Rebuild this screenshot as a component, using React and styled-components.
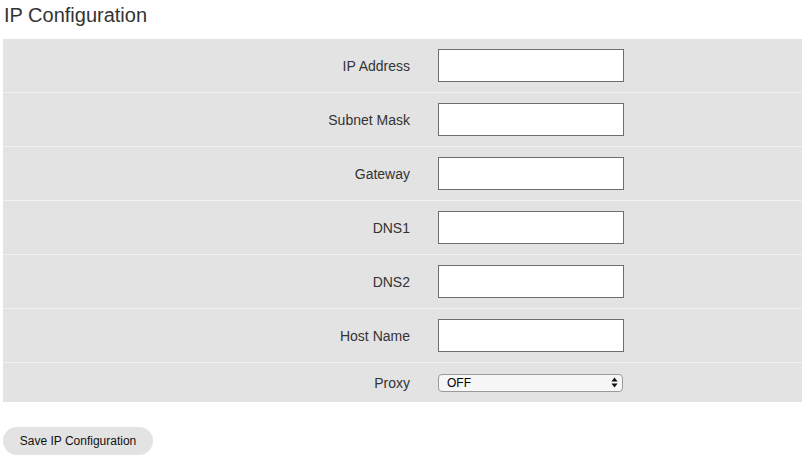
import React from "react";
import styled, { createGlobalStyle } from "styled-components";

const Global = createGlobalStyle`
  html, body { margin: 0; padding: 0; background: #fff; }
  body { font-family: "Liberation Sans", Arial, Helvetica, sans-serif; color: #333; }
`;

const Page = styled.div`
  padding: 0 7px 0 3px;
  width: 799px;
`;

const Title = styled.h1`
  margin: 0;
  padding: 3px 0 0 1px;
  height: 39px;
  box-sizing: border-box;
  font-size: 20px;
  font-weight: normal;
  line-height: 24px;
  color: #333;
`;

const Panel = styled.div`
  display: flex;
  flex-direction: column;
  gap: 1px;
  background: #f2f2f2;
`;

const Row = styled.div`
  display: grid;
  grid-template-columns: 407px 186px;
  column-gap: 28px;
  align-items: center;
  height: ${(p) => p.$h}px;
  background: #e3e3e3;
`;

const Label = styled.label`
  justify-self: end;
  font-size: 14px;
  color: #333;
`;

const TextInput = styled.input`
  box-sizing: border-box;
  width: 186px;
  height: 33px;
  border: 1px solid #6e6e6e;
  border-radius: 0;
  background: #fff;
  padding: 2px 6px;
  font-size: 13px;
  font-family: inherit;
  outline: none;
`;

const Select = styled.select`
  appearance: none;
  -webkit-appearance: none;
  box-sizing: border-box;
  width: 185px;
  height: 18px;
  border: 1px solid #9a9a9a;
  border-radius: 4px;
  background-color: #f7f7f7;
  background-image: url("data:image/svg+xml;utf8,<svg xmlns='http://www.w3.org/2000/svg' width='8' height='12'><path d='M4 0.5 L7.5 5 L0.5 5 Z' fill='%23111'/><path d='M4 11.5 L7.5 7 L0.5 7 Z' fill='%23111'/></svg>");
  background-repeat: no-repeat;
  background-size: 7px 11px;
  background-position: right 4px center;
  padding: 0 16px 0 8px;
  font-family: inherit;
  font-size: 12px;
  line-height: 16px;
  color: #000;
`;

const Actions = styled.div`
  padding-top: 25px;
`;

const Button = styled.button`
  box-sizing: border-box;
  width: 150px;
  height: 28px;
  border: none;
  border-radius: 14px;
  background: #e3e3e3;
  font-family: inherit;
  font-size: 12px;
  color: #111;
  padding: 0;
  cursor: pointer;
`;

const fields = ["IP Address", "Subnet Mask", "Gateway", "DNS1", "DNS2", "Host Name"];

export default function App() {
  return (
    <Page>
      <Global />
      <Title>IP Configuration</Title>
      <Panel>
        {fields.map((f) => (
          <Row key={f} $h={53}>
            <Label>{f}</Label>
            <TextInput type="text" />
          </Row>
        ))}
        <Row $h={39}>
          <Label>Proxy</Label>
          <Select defaultValue="OFF">
            <option>OFF</option>
            <option>ON</option>
          </Select>
        </Row>
      </Panel>
      <Actions>
        <Button>Save IP Configuration</Button>
      </Actions>
    </Page>
  );
}
